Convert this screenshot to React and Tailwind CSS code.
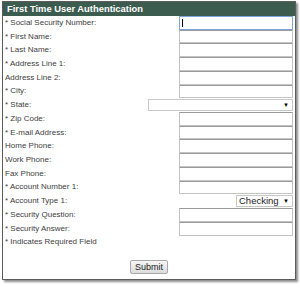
import React from 'react';

const fields = [
  { label: '* Social Security Number:', type: 'text', focus: true },
  { label: '* First Name:', type: 'text' },
  { label: '* Last Name:', type: 'text' },
  { label: '* Address Line 1:', type: 'text' },
  { label: 'Address Line 2:', type: 'text' },
  { label: '* City:', type: 'text' },
  { label: '* State:', type: 'state' },
  { label: '* Zip Code:', type: 'text' },
  { label: '* E-mail Address:', type: 'text' },
  { label: 'Home Phone:', type: 'text' },
  { label: 'Work Phone:', type: 'text' },
  { label: 'Fax Phone:', type: 'text' },
  { label: '* Account Number 1:', type: 'text' },
  { label: '* Account Type 1:', type: 'account' },
  { label: '* Security Question:', type: 'text' },
  { label: '* Security Answer:', type: 'text' },
];

function Field({ type, focus }) {
  if (type === 'state') {
    return (
      <div className="flex items-center justify-end w-[145px] h-[12px] mr-[2px] border border-[#c8c8c8] bg-white pr-[3px]">
        <span className="text-[6px] text-black leading-none">▼</span>
      </div>
    );
  }
  if (type === 'account') {
    return (
      <div className="flex items-center justify-between w-[57px] h-[12px] mr-[2px] border border-[#c8c8c8] bg-white pl-[2px] pr-[3px]">
        <span className="text-[9.5px] text-[#222] leading-none">Checking</span>
        <span className="text-[6px] text-black leading-none">▼</span>
      </div>
    );
  }
  return (
    <div
      className={`relative w-[114px] h-full mr-[2px] bg-white border ${
        focus ? 'border-[#7fa6dc]' : 'border-[#c4c4c4] border-t-[#9a9a9a]'
      }`}
    >
      {focus && <span className="absolute left-[2px] top-[2px] w-[1px] h-[8px] bg-black" />}
    </div>
  );
}

export default function App() {
  return (
    <div className="w-[300px] h-[289px] bg-white pt-[1px] pl-[2px]" style={{ fontFamily: '"Liberation Sans", Arial, sans-serif' }}>
      <div className="w-[294px] border border-[#5c5c5c] bg-white shadow-[2px_2px_2px_rgba(0,0,0,0.45)]">
        <div className="h-[14px] bg-[#3c5c4f] flex items-center pl-[4px]">
          <span className="text-white font-bold text-[9.4px] leading-none">First Time User Authentication</span>
        </div>
        {fields.map((f) => (
          <div key={f.label} className="flex items-center justify-between h-[13.73px]">
            <span className="pl-[2px] text-[8px] text-[#3e3e3e] leading-none">{f.label}</span>
            <Field type={f.type} focus={f.focus} />
          </div>
        ))}
        <div className="flex items-center h-[13.73px]">
          <span className="pl-[2px] text-[8px] text-[#3e3e3e] leading-none">* Indicates Required Field</span>
        </div>
        <div className="flex justify-center pt-[11px] pb-[5px]">
          <button className="w-[38px] h-[14px] border border-[#a8a8a8] rounded-[2px] bg-gradient-to-b from-[#f6f6f6] to-[#dcdcdc] text-[9px] text-[#222] leading-none">
            Submit
          </button>
        </div>
      </div>
    </div>
  );
}
